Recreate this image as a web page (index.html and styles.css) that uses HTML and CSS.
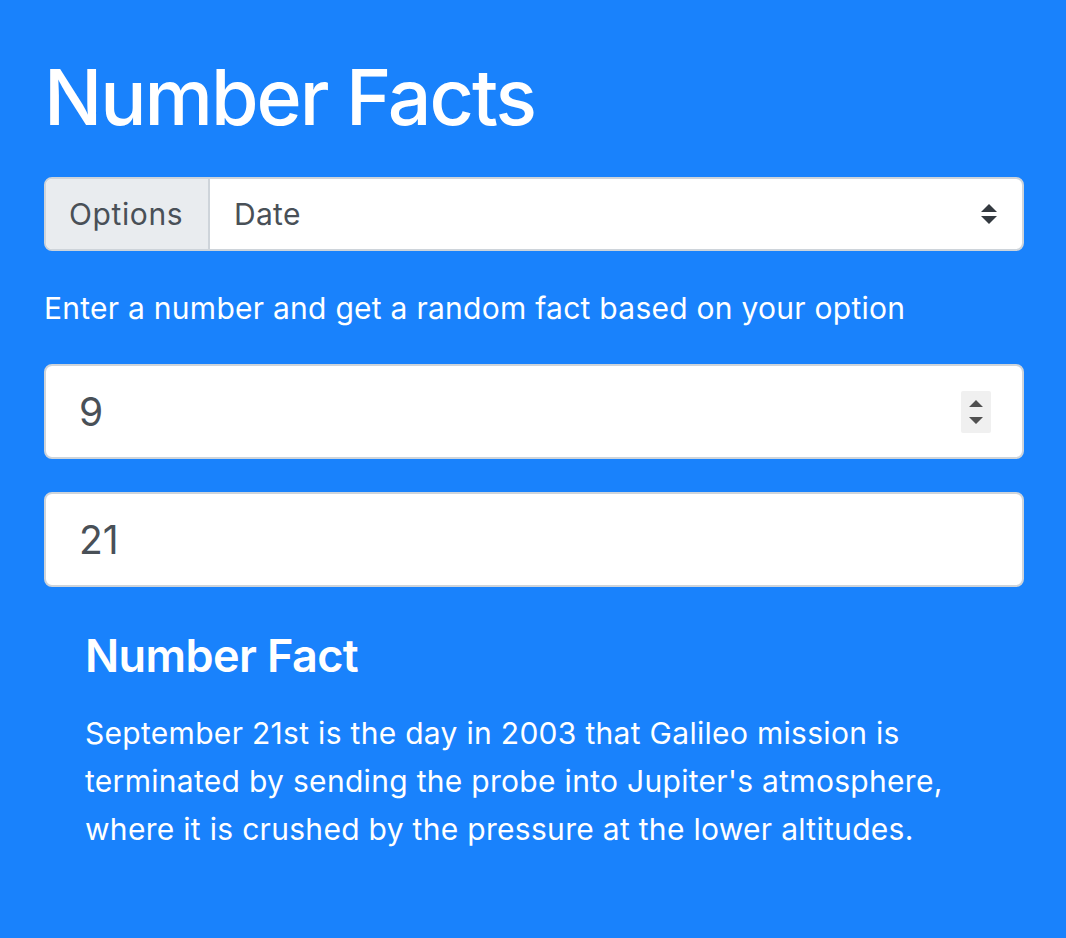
FILE: index.html
```html
<!DOCTYPE html>
<html lang="en">
<head>
<meta charset="utf-8">
<title>Number Facts</title>
<link rel="stylesheet" href="styles.css">
</head>
<body>
<main class="page">
  <h1 class="title">Number Facts</h1>
  <div class="input-group">
    <span class="addon">Options</span>
    <div class="select">
      <span class="select-value">Date</span>
      <svg class="select-arrows" width="18" height="22" viewBox="0 0 18 22"><path d="M9 1 L17 9 H1 Z M1 13 H17 L9 21 Z" fill="#343a40"/></svg>
    </div>
  </div>
  <p class="hint">Enter a number and get a random fact based on your option</p>
  <div class="field">
    <span class="field-value">9</span>
    <span class="spinner">
      <svg width="30" height="42" viewBox="0 0 30 42"><path d="M15 9 L22 16 H8 Z M8 26 H22 L15 33 Z" fill="#505050"/></svg>
    </span>
  </div>
  <div class="field">
    <span class="field-value">21</span>
  </div>
  <section class="fact">
    <h2 class="fact-title">Number Fact</h2>
    <p class="fact-text">September 21st is the day in 2003 that Galileo mission is terminated by sending the probe into Jupiter's atmosphere, where it is crushed by the pressure at the lower altitudes.</p>
  </section>
</main>
</body>
</html>
```
FILE: styles.css
```css
html, body {
  margin: 0;
  padding: 0;
}
body {
  background: #1982fc;
  font-family: Inter, "Noto Sans", "Liberation Sans", sans-serif;
  color: #fff;
  height: 938px;
}
.page {
  padding: 50px 42px 0 44px;
}
.title {
  margin: 0 0 33px 0;
  font-size: 77px;
  font-weight: 500;
  line-height: 94px;
  letter-spacing: -2px;
}
.input-group {
  display: flex;
  height: 74px;
  box-sizing: border-box;
  border-radius: 8px;
  overflow: hidden;
  border: 2px solid #ced4da;
  background: #fff;
}
.addon {
  display: flex;
  align-items: center;
  width: 164px;
  box-sizing: border-box;
  padding-left: 23px;
  background: #e9ecef;
  border-right: 2px solid #ced4da;
  color: #495057;
  font-size: 30px;
  letter-spacing: 0.6px;
}
.select {
  flex: 1;
  display: flex;
  align-items: center;
  justify-content: space-between;
  padding: 0 24px 0 24px;
  color: #495057;
  font-size: 30px;
  letter-spacing: 0.3px;
}
.hint {
  margin: 0;
  padding-top: 37px;
  font-size: 30px;
  line-height: 40px;
  letter-spacing: 0.26px;
}
.field {
  margin-top: 36px;
  height: 95px;
  box-sizing: border-box;
  border: 2px solid #ced4da;
  border-radius: 8px;
  background: #fff;
  display: flex;
  align-items: center;
  justify-content: space-between;
  padding: 0 31px 0 33px;
  color: #495057;
  font-size: 39px;
}
.field + .field {
  margin-top: 33px;
}
.spinner {
  display: flex;
  background: #f0f0f0;
  border-radius: 2px;
  width: 30px;
  height: 42px;
}
.fact {
  padding: 42px 40px 0 41px;
}
.fact-title {
  margin: 0 0 26px 0;
  font-size: 45px;
  font-weight: 600;
  line-height: 54px;
  letter-spacing: -0.6px;
}
.fact-text {
  margin: 0;
  font-size: 30px;
  line-height: 48px;
  letter-spacing: 0.3px;
}
```
